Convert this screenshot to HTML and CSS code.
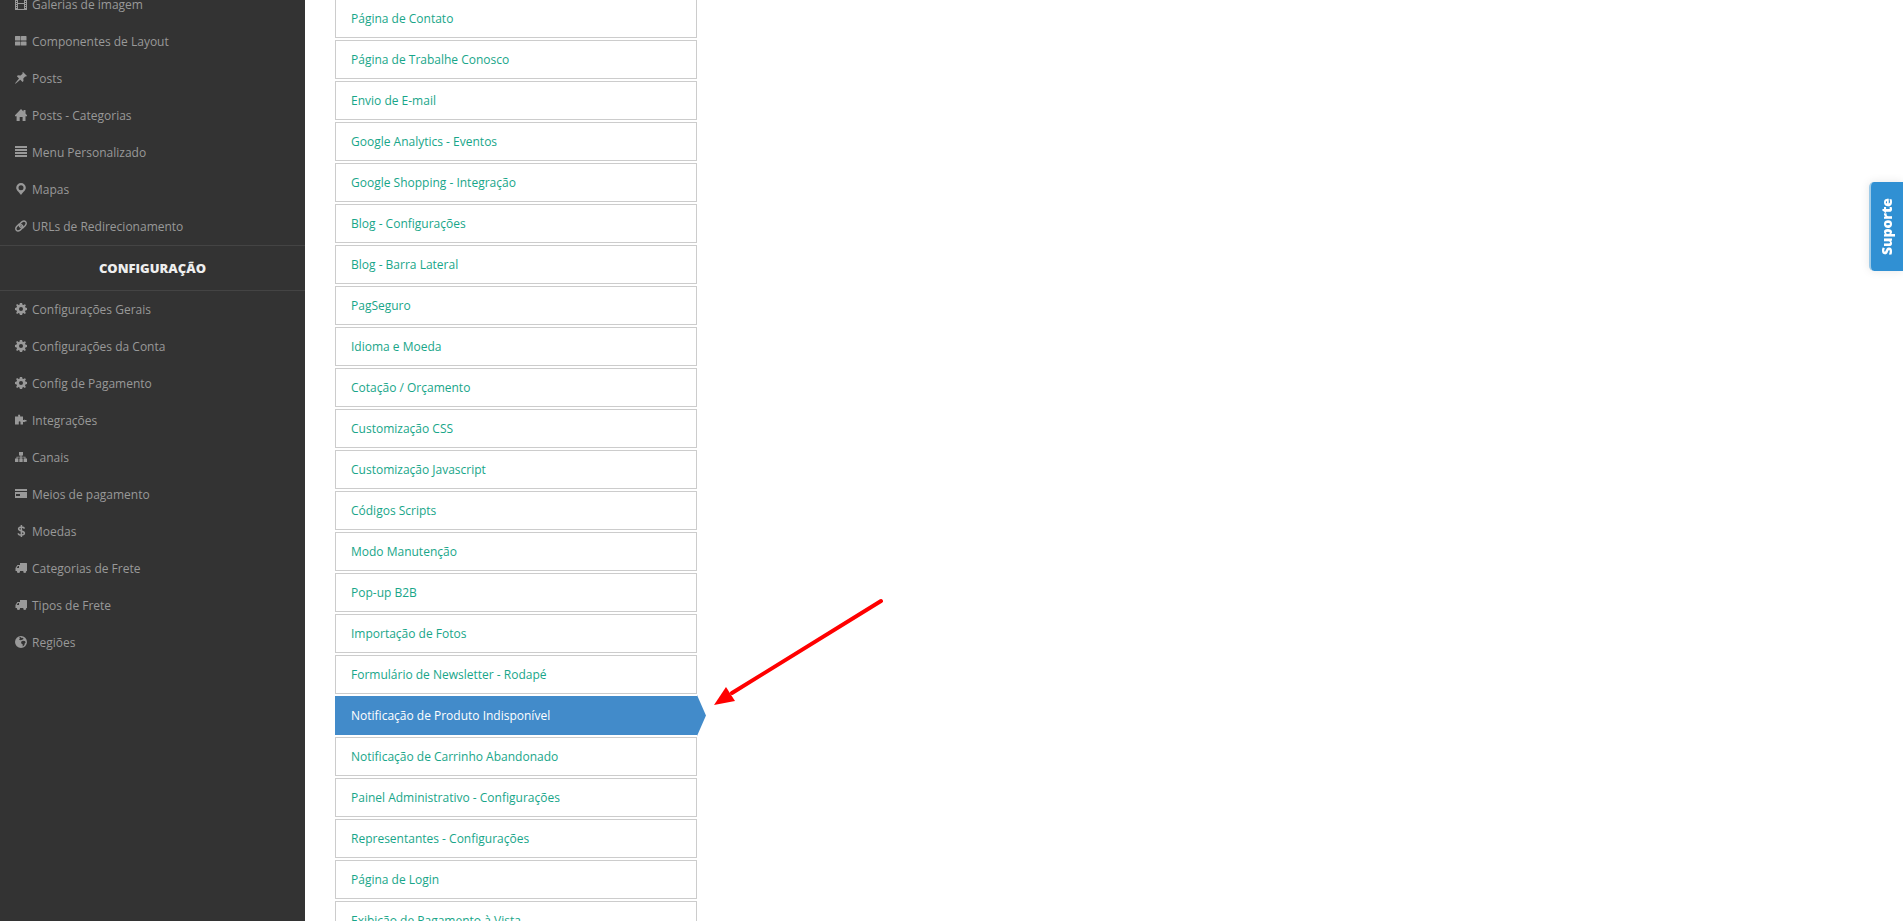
FILE: index.html
```html
<!DOCTYPE html>
<html lang="pt-BR">
<head>
<meta charset="utf-8">
<title>Configurações</title>
<link rel="stylesheet" href="styles.css">
</head>
<body>
<svg class="sprite" aria-hidden="true">
  <symbol id="film" viewBox="0 0 12 12"><path fill-rule="evenodd" d="M0 0h12v12H0zM1 1v1h1V1zm0 2v1h1V3zm0 2v1h1V5zm0 2v1h1V7zm0 2v1h1V9zM3 1v4h6V1zm0 5v5h6V6zm7-5v1h1V1zm0 2v1h1V3zm0 2v1h1V5zm0 2v1h1V7zm0 2v1h1V9z"/></symbol>
  <symbol id="grid" viewBox="0 0 12 12"><path d="M.5 1h4.500q.5 0 .5.500V5q0 .5-.5.5H.5Q0 5.500 0 5V1.500Q0 1 .5 1zm6 0H11q.5 0 .5.500V5q0 .5-.5.5H6.500Q6 5.500 6 5V1.500Q6 1 6.500 1zm-6 5.500H5q.5 0 .5.500v3q0 .5-.5.5H.5Q0 10.500 0 10V7q0-.5.5-.5zm6 0H11q.5 0 .5.500v3q0 .5-.5.5H6.500Q6 10.500 6 10V7q0-.5.5-.5z"/></symbol>
  <symbol id="pin" viewBox="0 0 12 12"><path d="M8 0l4 4-1 .6-.8-.2L8.300 6.500 8.500 9l-1 1-2.200-2.200L.5 11.700l-.4-.4L4 6.500 1.900 4.300l1-1 2.600.2L7.600 1.700 7.400.8z"/></symbol>
  <symbol id="home" viewBox="0 0 12 12"><path d="M6 0l2.500 2.500V1h2v3.500L12 6.300v.9h-1.500V12H7.600V8H4.700v4H1.600V7.200H0v-.9z"/></symbol>
  <symbol id="lines" viewBox="0 0 12 12"><path d="M0 0h12v2H0zm0 3h12v2H0zm0 3h12v2H0zm0 3h12v2H0z"/></symbol>
  <symbol id="marker" viewBox="0 0 12 12"><path fill-rule="evenodd" d="M6 0a4.800 4.800 0 0 1 4.800 4.800C10.800 7.500 8 9 6 12 4 9 1.200 7.500 1.200 4.800A4.800 4.800 0 0 1 6 0zm0 2.200a2.500 2.500 0 1 0 0 5 2.500 2.500 0 0 0 0-5z"/></symbol>
  <symbol id="link" viewBox="0 0 12 12"><g fill="none" stroke="currentColor" stroke-width="1.400"><path d="M7.500 8.300L10.300 5.500Q12 3.400 10.600 1.800T6.800 1.900L4.700 4Q3.600 5.400 4.700 6.600T7.300 6.500"/><path d="M4.500 3.700L1.700 6.500Q0 8.600 1.400 10.200T5.200 10.100L7.300 8Q8.400 6.600 7.300 5.400T4.700 5.500"/></g></symbol>
  <symbol id="cog" viewBox="0 0 12 12"><path fill-rule="evenodd" d="M4.900 0h2.200l.4 1.700.9.400L9.900 1.200l.9.900.1.100-.9 1.500.4.900 1.600.4v2.100l-1.600.4-.4.900.9 1.500-1.100 1-1.400-.9-.9.400-.4 1.600H4.900l-.4-1.600-.9-.4-1.500.9L1.100 9.900 2 8.400l-.4-.9L0 7.100V4.900l1.600-.4.400-.9-.9-1.500 1-1 1.500 1 .9-.4zM6 4a2 2 0 1 0 0 4 2 2 0 0 0 0-4z"/></symbol>
  <symbol id="puzzle" viewBox="0 0 12 12"><path d="M0 2.500h3.300Q2.500.5 4 .5t1.200 2H8v3.500h1Q9.600 5 10 6h1.500v1.500H10Q9.600 8.500 9 8H8v2.500H5.500V8.800q.4-1.600-.9-1.600t-.8 1.600v1.700H0z"/></symbol>
  <symbol id="tree" viewBox="0 0 12 12"><path d="M4 1h4v3.500H6.600v1.300h3.900v1.700H12V11H8.600V7.500h1V6.600h-3v.9h1.100V11H4.300V7.500h1.100v-.9h-3v.9h1V11H0V7.500h1.500V5.800h3.900V4.500H4z"/></symbol>
  <symbol id="card" viewBox="0 0 12 12"><path fill-rule="evenodd" d="M0 1h12v2H0zm0 3h12v6H0zm1 2v2h4V6z"/></symbol>
  <symbol id="dollar" viewBox="0 0 12 12"><path fill="none" stroke="currentColor" stroke-width="1.500" d="M9.300 3.700Q9 1.900 6.400 1.900T3.600 3.800q0 1.500 2.800 2.100t3 2.200q0 2-3 2T3.300 8.200M6.400 0v12"/></symbol>
  <symbol id="truck" viewBox="0 0 12 12"><path fill-rule="evenodd" d="M5 1h6.500q.5 0 .5.500V9h-.8a1.500 1.500 0 1 1-2.900 0H5a1.600 1.600 0 1 1-3.100 0H.5V6L2.400 3H5zM3 4L1.700 6H4V4z"/></symbol>
  <symbol id="globe" viewBox="0 0 12 12"><path fill-rule="evenodd" d="M6 0a6 6 0 1 1 0 12A6 6 0 0 1 6 0zM5.500 1L4 1.700l1 .8-1 1.200 1.500.6 1.700-.6L8.500 3 8 1.700 6.800 2zM8 4.700l-1.700.8-.2 1.800 1.500.9.200 2.400 1.600-1.500.3-1.600 1-1.200-.9-1.300z"/></symbol>
</svg>
<div class="app">
  <nav class="sidebar" aria-label="Menu principal">
    <ul class="menu">
      <li><a class="menu-link" href="#"><svg class="icon"><use href="#film"/></svg>Galerias de imagem</a></li>
      <li><a class="menu-link" href="#"><svg class="icon"><use href="#grid"/></svg>Componentes de Layout</a></li>
      <li><a class="menu-link" href="#"><svg class="icon"><use href="#pin"/></svg>Posts</a></li>
      <li><a class="menu-link" href="#"><svg class="icon"><use href="#home"/></svg>Posts - Categorias</a></li>
      <li><a class="menu-link" href="#"><svg class="icon"><use href="#lines"/></svg>Menu Personalizado</a></li>
      <li><a class="menu-link" href="#"><svg class="icon"><use href="#marker"/></svg>Mapas</a></li>
      <li><a class="menu-link" href="#"><svg class="icon"><use href="#link"/></svg>URLs de Redirecionamento</a></li>
    </ul>
    <h2 class="menu-title">CONFIGURAÇÃO</h2>
    <ul class="menu">
      <li><a class="menu-link" href="#"><svg class="icon"><use href="#cog"/></svg>Configurações Gerais</a></li>
      <li><a class="menu-link" href="#"><svg class="icon"><use href="#cog"/></svg>Configurações da Conta</a></li>
      <li><a class="menu-link" href="#"><svg class="icon"><use href="#cog"/></svg>Config de Pagamento</a></li>
      <li><a class="menu-link" href="#"><svg class="icon"><use href="#puzzle"/></svg>Integrações</a></li>
      <li><a class="menu-link" href="#"><svg class="icon"><use href="#tree"/></svg>Canais</a></li>
      <li><a class="menu-link" href="#"><svg class="icon"><use href="#card"/></svg>Meios de pagamento</a></li>
      <li><a class="menu-link" href="#"><svg class="icon"><use href="#dollar"/></svg>Moedas</a></li>
      <li><a class="menu-link" href="#"><svg class="icon"><use href="#truck"/></svg>Categorias de Frete</a></li>
      <li><a class="menu-link" href="#"><svg class="icon"><use href="#truck"/></svg>Tipos de Frete</a></li>
      <li><a class="menu-link" href="#"><svg class="icon"><use href="#globe"/></svg>Regiões</a></li>
    </ul>
  </nav>
  <main class="content">
    <ul class="tabs">
      <li><a class="tab" href="#">Página de Contato</a></li>
      <li><a class="tab" href="#">Página de Trabalhe Conosco</a></li>
      <li><a class="tab" href="#">Envio de E-mail</a></li>
      <li><a class="tab" href="#">Google Analytics - Eventos</a></li>
      <li><a class="tab" href="#">Google Shopping - Integração</a></li>
      <li><a class="tab" href="#">Blog - Configurações</a></li>
      <li><a class="tab" href="#">Blog - Barra Lateral</a></li>
      <li><a class="tab" href="#">PagSeguro</a></li>
      <li><a class="tab" href="#">Idioma e Moeda</a></li>
      <li><a class="tab" href="#">Cotação / Orçamento</a></li>
      <li><a class="tab" href="#">Customização CSS</a></li>
      <li><a class="tab" href="#">Customização Javascript</a></li>
      <li><a class="tab" href="#">Códigos Scripts</a></li>
      <li><a class="tab" href="#">Modo Manutenção</a></li>
      <li><a class="tab" href="#">Pop-up B2B</a></li>
      <li><a class="tab" href="#">Importação de Fotos</a></li>
      <li><a class="tab" href="#">Formulário de Newsletter - Rodapé</a></li>
      <li class="current">
        <a class="tab tab-active" href="#" aria-current="page">Notificação de Produto Indisponível</a>
        <svg class="arrow" viewBox="0 0 172 108" aria-hidden="true"><path d="M167 4L18 96" fill="none" stroke="#f00" stroke-width="4" stroke-linecap="round"/><path d="M0 108L12 90l9 14z" fill="#f00"/></svg>
      </li>
      <li><a class="tab" href="#">Notificação de Carrinho Abandonado</a></li>
      <li><a class="tab" href="#">Painel Administrativo - Configurações</a></li>
      <li><a class="tab" href="#">Representantes - Configurações</a></li>
      <li><a class="tab" href="#">Página de Login</a></li>
      <li><a class="tab" href="#">Exibição de Pagamento à Vista</a></li>
    </ul>
  </main>
</div>
<button class="support" type="button">Suporte</button>
</body>
</html>
```
FILE: styles.css
```css
* {
  box-sizing: border-box;
}

body {
  margin: 0;
  background: #fff;
  font: 12px/20px "Open Sans", sans-serif;
}

a {
  text-decoration: none;
}

ul {
  margin: 0;
  padding: 0;
  list-style: none;
}

.sprite {
  position: absolute;
  width: 0;
  height: 0;
}

.app {
  display: flex;
  height: 100vh;
  overflow: hidden;
}

.sidebar {
  flex: none;
  width: 305px;
  background: #333;
}

.sidebar .menu:first-child {
  margin-top: -14px;
}

.menu-link {
  display: flex;
  align-items: flex-start;
  gap: 5px;
  padding: 9px 15px 8px;
  color: #999;
}

.icon {
  flex: none;
  width: 12px;
  height: 12px;
  margin-top: 3px;
  fill: currentColor;
}

.menu-title {
  margin: 0;
  padding: 12px 0;
  border: solid #444;
  border-width: 1px 0;
  color: #eee;
  font-size: 13px;
  font-weight: 800;
  line-height: 20px;
  text-align: center;
}

.content {
  flex: 1;
  padding: 0 60px 0 30px;
}

.tabs {
  display: flex;
  flex-direction: column;
  gap: 2px;
  width: 25%;
  margin-top: -1px;
  padding-right: 15px;
}

.current {
  position: relative;
}

.tab {
  display: block;
  padding: 9px 15px 8px;
  border: 1px solid #ccc;
  color: #18a689;
}

.tab-active {
  border-color: #428bca;
  background: #428bca;
  color: #fff;
}

.tab-active::after {
  content: "";
  position: absolute;
  top: -1px;
  left: 100%;
  width: 9px;
  height: 41px;
  background: #428bca;
  clip-path: polygon(0 0, 100% 50%, 0 100%);
}

.arrow {
  position: absolute;
  bottom: 30px;
  left: calc(100% + 17px);
  width: 172px;
  height: 108px;
}

.support {
  position: fixed;
  top: 182px;
  right: 0;
  width: 34px;
  height: 89px;
  padding: 0;
  border: 0;
  border-left: 2px solid #9fcbe8;
  border-radius: 5px 0 0 5px;
  background: #3090d3;
  box-shadow: 0 0 10px rgba(0, 0, 0, 0.1);
  color: #fff;
  font: 800 14px/20px "Open Sans", sans-serif;
  writing-mode: sideways-lr;
  text-align: center;
}
```
